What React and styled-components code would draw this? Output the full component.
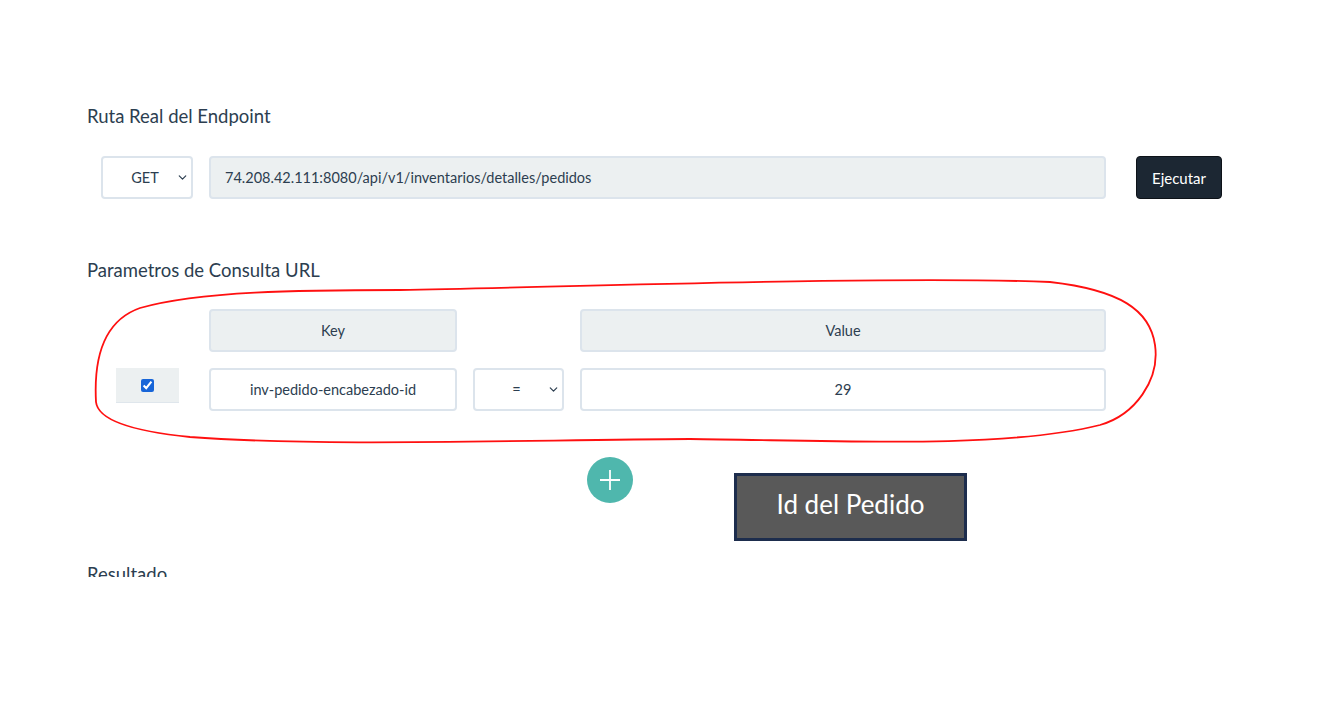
import React from 'react';
import styled, { createGlobalStyle } from 'styled-components';
import { ChevronDown } from 'lucide-react';

const GlobalStyle = createGlobalStyle`
	html, body {
		margin: 0;
		background: #ffffff;
		font-family: Lato, 'Open Sans', sans-serif;
		color: #2c3e50;
	}
	* {
		box-sizing: border-box;
	}
`;

const Screen = styled.div`
	position: relative;
	width: 1325px;
	height: 705px;
	overflow: hidden;
`;

const Page = styled.div`
	height: 577px;
	overflow: hidden;
	padding: 104px 0 0 87px;
`;

const SectionTitle = styled.h4`
	margin: ${(p) => p.$top || 0}px 0 ${(p) => p.$bottom || 0}px;
	font-size: 18.5px;
	line-height: 24px;
	font-weight: 400;
	color: #2c3e50;
`;

const EndpointRow = styled.div`
	display: flex;
	height: 43px;
	margin-left: 14px;
`;

const SelectWrap = styled.div`
	position: relative;
	width: ${(p) => p.$width}px;
	height: 43px;
	margin-right: ${(p) => p.$right || 0}px;
	.chevron {
		position: absolute;
		right: 4px;
		top: 15px;
		color: #2c3e50;
		pointer-events: none;
	}
`;

const Select = styled.select`
	appearance: none;
	width: 100%;
	height: 100%;
	border: 2px solid #dce4ec;
	border-radius: 4px;
	background: #ffffff;
	font-family: Lato, sans-serif;
	font-size: 14.5px;
	color: #2c3e50;
	text-align: center;
	text-align-last: center;
	padding: 0 4px 0 0;
	outline: none;
`;

const Field = styled.input`
	width: ${(p) => (p.$width ? `${p.$width}px` : '100%')};
	height: 43px;
	margin-right: ${(p) => p.$right || 0}px;
	border: 2px solid #dce4ec;
	border-radius: 4px;
	background: ${(p) => (p.readOnly ? '#ecf0f1' : '#ffffff')};
	font-family: Lato, sans-serif;
	font-size: 14.5px;
	color: #2c3e50;
	padding: 0 14px;
	text-align: ${(p) => (p.$center ? 'center' : 'left')};
	outline: none;
`;

const RunButton = styled.button`
	width: 86px;
	height: 43px;
	background: #1c2733;
	border: 1px solid #0d1218;
	border-radius: 4px;
	color: #ffffff;
	font-family: Lato, sans-serif;
	font-size: 15px;
	padding: 0;
`;

const ParamGrid = styled.div`
	display: grid;
	grid-template-columns: 92px 248px 91px 526px;
	column-gap: 16px;
	row-gap: 16px;
	margin-left: 14px;
	align-items: start;
`;

const HeaderCell = styled.div`
	grid-column: ${(p) => p.$col};
	height: 43px;
	display: flex;
	align-items: center;
	justify-content: center;
	background: #ecf0f1;
	border: 2px solid #dce4ec;
	border-radius: 4px;
	font-size: 14.5px;
	color: #2c3e50;
`;

const CheckCell = styled.label`
	justify-self: center;
	width: 63px;
	height: 35px;
	display: flex;
	align-items: center;
	justify-content: center;
	background: #ecf0f1;
	border-bottom: 1px solid #dfe6ec;
	input {
		margin: 0;
		width: 13px;
		height: 13px;
		accent-color: #1765d8;
	}
`;

const AddRow = styled.div`
	margin-top: 46px;
	padding-left: 500px;
`;

const AddButton = styled.button`
	width: 46px;
	height: 46px;
	border-radius: 50%;
	border: none;
	background: #4fb7ad;
	display: flex;
	align-items: center;
	justify-content: center;
	padding: 0;
`;

const Annotation = styled.svg`
	position: absolute;
	left: 0;
	top: 0;
	pointer-events: none;
`;

const Callout = styled.div`
	position: absolute;
	left: 734px;
	top: 473px;
	width: 233px;
	height: 68px;
	background: #595959;
	border: 3px solid #1d2d4d;
	display: flex;
	align-items: center;
	justify-content: center;
	padding-bottom: 6px;
	color: #ffffff;
	font-family: Lato, 'Open Sans', sans-serif;
	font-size: 26px;
`;

const MethodSelect = ({ value, width, right }) => (
	<SelectWrap $width={width} $right={right}>
		<Select defaultValue={value}>
			<option>{value}</option>
		</Select>
		<ChevronDown className="chevron" size={13} strokeWidth={2.2} />
	</SelectWrap>
);

const App = () => {
	return (
		<>
			<GlobalStyle />
			<Screen>
				<Page>
					<SectionTitle $bottom={28}>Ruta Real del Endpoint</SectionTitle>
					<EndpointRow>
						<MethodSelect value="GET" width={92} right={16} />
						<Field
							readOnly
							$width={897}
							$right={30}
							value="74.208.42.111:8080/api/v1/inventarios/detalles/pedidos"
						/>
						<RunButton>Ejecutar</RunButton>
					</EndpointRow>

					<SectionTitle $top={59} $bottom={27}>
						Parametros de Consulta URL
					</SectionTitle>
					<ParamGrid>
						<HeaderCell $col={2}>Key</HeaderCell>
						<HeaderCell $col={4}>Value</HeaderCell>
						<CheckCell>
							<input type="checkbox" defaultChecked />
						</CheckCell>
						<Field $center defaultValue="inv-pedido-encabezado-id" />
						<MethodSelect value="=" width={91} />
						<Field $center defaultValue="29" />
					</ParamGrid>

					<AddRow>
						<AddButton>
							<svg width="24" height="24" viewBox="0 0 24 24">
								<path
									d="M12 2v20M2 12h20"
									stroke="#ffffff"
									strokeWidth="1.8"
									fill="none"
								/>
							</svg>
						</AddButton>
					</AddRow>

					<SectionTitle $top={59}>Resultado</SectionTitle>
				</Page>

				<Annotation width="1325" height="705" viewBox="0 0 1325 705">
					<path
						d="M 1050 282
							C 1120 290, 1150 310, 1155 345
							C 1160 380, 1135 415, 1100 425
							C 1000 450, 820 440, 690 439
							C 520 440, 320 447, 190 437
							C 130 431, 98 420, 96 402
							C 94 365, 100 322, 140 308
							C 200 291, 300 290, 400 290
							C 600 286, 900 276, 1050 282 Z"
						fill="none"
						stroke="#ff1010"
						strokeWidth="1.8"
					/>
				</Annotation>

				<Callout>Id del Pedido</Callout>
			</Screen>
		</>
	);
};

export default App;
